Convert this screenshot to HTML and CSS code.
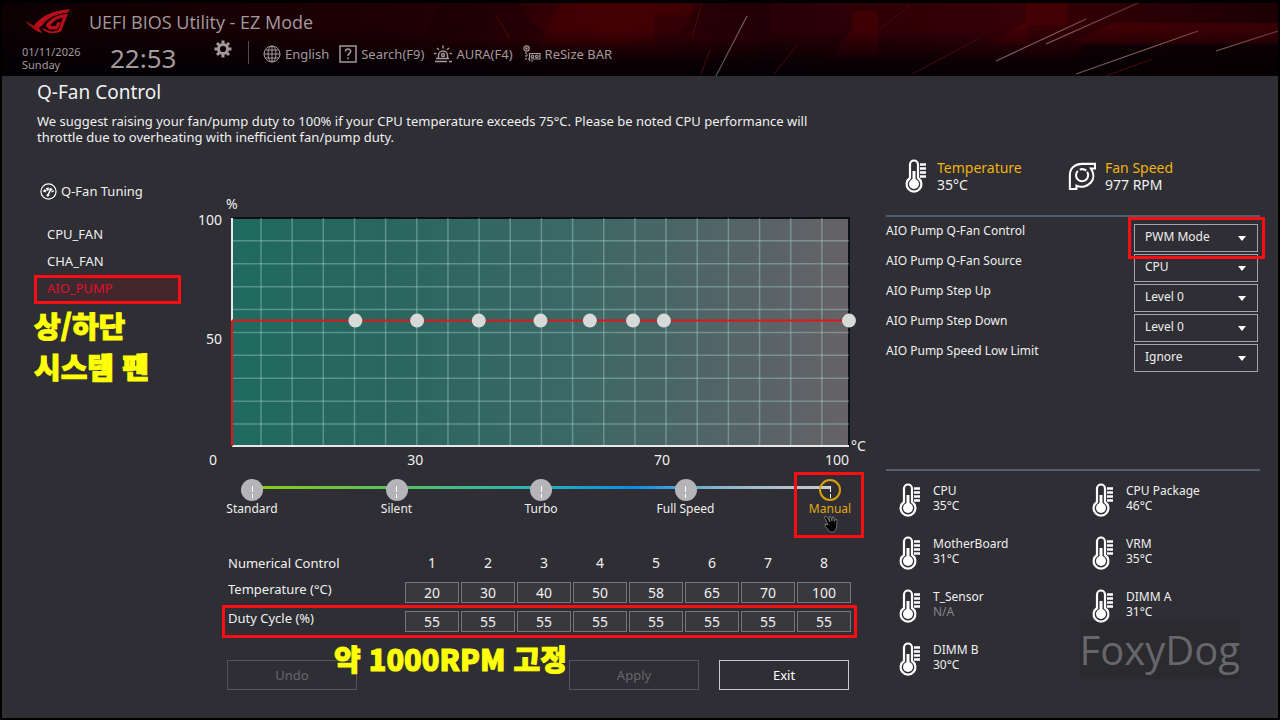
FILE: index.html
```html
<!DOCTYPE html>
<html lang="en">
    <head>
        <meta charset="utf-8" />
        <meta name="viewport" content="width=device-width, initial-scale=1" />
        <title>UEFI BIOS Utility - EZ Mode</title>
        <link rel="stylesheet" href="styles.css">
    </head>
    <body>
        <!-- shared icons -->
        <svg class="sprite" aria-hidden="true">
            <symbol id="thermo" viewBox="0 0 24 34">
                <path d="M6 19V5.500a4 4 0 0 1 8 0V19a7.400 7.400 0 1 1-8 0Z" fill="none" stroke="#fff" stroke-width="2.200"/>
                <circle cx="10" cy="25" r="5" fill="#fff"/>
                <path d="M10 12v12" stroke="#fff" stroke-width="3"/>
                <path d="M16 5.500h6M16 9.500h6M16 13.500h6M16 17.500h6" stroke="#fff" stroke-width="2.400"/>
            </symbol>
        </svg>

        <div class="bios">
            <header class="top">
                <svg class="top-art" viewBox="0 0 1276 73" preserveAspectRatio="none" aria-hidden="true">
                    <defs>
                        <linearGradient id="red" x1="0" x2="1" y1="0" y2="0">
                            <stop offset="0" stop-color="#0c0003"/>
                            <stop offset=".2" stop-color="#180004"/>
                            <stop offset=".34" stop-color="#220004"/>
                            <stop offset=".48" stop-color="#3a0004"/>
                            <stop offset=".6" stop-color="#280006"/>
                            <stop offset=".8" stop-color="#360006"/>
                            <stop offset="1" stop-color="#1c0004"/>
                        </linearGradient>
                        <linearGradient id="fade" x1="0" x2="0" y1="0" y2="1">
                            <stop offset=".35" stop-color="#030004" stop-opacity="0"/>
                            <stop offset=".8" stop-color="#030004" stop-opacity=".8"/>
                            <stop offset="1" stop-color="#030004"/>
                        </linearGradient>
                        <linearGradient id="ray" x1="0" x2="1" y1="1" y2="0">
                            <stop offset="0" stop-color="#555"/>
                            <stop offset=".6" stop-color="#8a5a5a"/>
                            <stop offset="1" stop-color="#4a1216"/>
                        </linearGradient>
                    </defs>
                    <rect width="1276" height="73" fill="url(#red)"/>
                    <path d="M580 0h110v12H652v30H538l20-42Z" fill="#5a0004" opacity=".35"/>
                    <path d="M850 8h26v48h-50l24-30Z" fill="#5a0004" opacity=".4"/>
                    <path d="M1024 0h42v22h-40v20h-40l38-24Z" fill="#5a0004" opacity=".4"/>
                    <path d="M1110 20h168v20H1068Z" fill="#500004" opacity=".5"/>
                    <path d="M440 0h78l20 30H424ZM698 0h70v30h-86Z" fill="#100006" opacity=".3"/>
                    <rect width="1276" height="73" fill="url(#fade)"/>
                    <path d="M1082 42h194v31H1060Z" fill="#060003" opacity=".6"/>
                    <path d="M700 0l-10 34M708 47l-9 24M796 41l-24 30M908 2l-30 24M976 36l-66 35M494 12l14 24M1150 56l-46 17" stroke="#4c080d" stroke-width="1"/>
                    <path d="M714 73l31-60M994 58l90-42M1044 41l92-41M1074 71l122-43M1214 48l62-20" stroke="url(#ray)" stroke-width="1.200"/>
                </svg>

                <div class="brand">
                    <svg class="logo" viewBox="0 0 134 74" role="img" aria-label="ROG">
                        <g fill="#b80d1b">
                            <path d="M24 52C44 22 80 4 133 1c-4 5-6 8-8 10C92 14 66 26 50 48l-10 9Z"/>
                            <path d="M60 49C72 28 94 17 126 14L106 66c-22 10-44 7-58-9l12 3c12 8 26 8 38 2l13-36C94 29 80 37 74 50h16l5-11h10l-10 22H70Z"/>
                            <path d="M0 34c8 7 16 12 25 15l-3 5C12 50 5 43 0 34ZM16 50l24 7 10 14C36 68 25 60 16 50Z"/>
                        </g>
                    </svg>
                    <p class="title">UEFI BIOS Utility - EZ Mode</p>
                </div>

                <div class="status">
                    <p class="date">01/11/2026<br>Sunday</p>
                    <p class="clock">22:53</p>
                    <button class="gear" aria-label="Settings">
                        <svg viewBox="0 0 18 18" width="18" height="18">
                            <circle cx="9" cy="9" r="4.600" fill="none" stroke="currentColor" stroke-width="3"/>
                            <path d="M9 .5v3M9 14.500v3M.5 9h3M14.500 9h3M3 3l2.200 2.200M12.800 12.800L15 15M15 3l-2.200 2.200M5.200 12.800L3 15" stroke="currentColor" stroke-width="3"/>
                        </svg>
                    </button>
                    <div class="tools">
                        <button class="tool">
                            <svg viewBox="0 0 18 18" width="18" height="18" fill="none" stroke="currentColor">
                                <circle cx="9" cy="9" r="8"/>
                                <ellipse cx="9" cy="9" rx="4" ry="8"/>
                                <path d="M9 1v16M1 9h16M2.500 5h13M2.500 13h13"/>
                            </svg>
                            English
                        </button>
                        <button class="tool">
                            <svg viewBox="0 0 18 18" width="18" height="18" fill="none" stroke="currentColor" stroke-width="1.500">
                                <rect x="1" y="1" width="16" height="16"/>
                                <path d="M6.500 6.500c0-3.500 5.500-3 5.200 0C11.500 8.500 9 8.300 9 11M9 12.500v1.800"/>
                            </svg>
                            Search(F9)
                        </button>
                        <button class="tool">
                            <svg viewBox="0 0 18 18" width="18" height="18" fill="none" stroke="currentColor" stroke-width="1.400">
                                <path d="M4.500 13V10.500a4.500 4.500 0 0 1 9 0V13M2 13.500h13M1 16.500h12M15 16.500h3M9 .5v3M3 3l1.800 1.800M15 3l-1.800 1.800M0 8.500h2.500M15.500 8.500H18"/>
                                <circle cx="9" cy="10" r="1.500"/>
                            </svg>
                            AURA(F4)
                        </button>
                        <button class="tool">
                            <svg viewBox="0 0 18 18" width="18" height="18" fill="none" stroke="currentColor" stroke-width="1.200">
                                <circle cx="3.500" cy="3.500" r="2.600"/>
                                <circle cx="3.500" cy="3.500" r=".6"/>
                                <path d="M3 7v7h3M3 10h2" stroke-dasharray="2 1"/>
                                <path d="M6.500 16V8.500H17V14H8M8 16h2"/>
                                <circle cx="9.500" cy="11.300" r="1.300"/>
                                <circle cx="13.800" cy="11.300" r="1.300"/>
                            </svg>
                            ReSize BAR
                        </button>
                    </div>
                </div>
            </header>

            <main>
                <section class="intro">
                    <h1>Q-Fan Control</h1>
                    <p>We suggest raising your fan/pump duty to 100% if your CPU temperature exceeds 75°C. Please be noted CPU performance will throttle due to overheating with inefficient fan/pump duty.</p>
                </section>

                <div class="columns">
                    <nav class="fans">
                        <h2>
                            <svg viewBox="0 0 18 18" width="17" height="17" fill="none" stroke="#fff">
                                <circle cx="9" cy="9" r="8" stroke-width="1.300"/>
                                <path d="M4.500 9.500a4.800 4.800 0 0 1 9 0" stroke-width="3" stroke-dasharray="2.600 .8"/>
                                <path d="M8.500 13l2.500-6" stroke-width="1.600"/>
                                <circle cx="8.300" cy="13" r="1" fill="#fff"/>
                            </svg>
                            Q-Fan Tuning
                        </h2>
                        <ul>
                            <li><button>CPU_FAN</button></li>
                            <li><button>CHA_FAN</button></li>
                            <li class="marked"><button class="active">AIO_PUMP</button></li>
                        </ul>
                        <p class="note" lang="ko">상/하단<br>시스템 팬</p>
                    </nav>

                    <section class="tuning">
                        <div class="chart">
                            <span class="unit-y">%</span>
                            <div class="axis-y"><span>100</span><span>50</span></div>
                            <svg class="plot" role="img" aria-label="Fan curve">
                                <defs>
                                    <linearGradient id="area">
                                        <stop offset="0" stop-color="#1f6a60"/>
                                        <stop offset=".25" stop-color="#2a665f"/>
                                        <stop offset=".55" stop-color="#3b6866"/>
                                        <stop offset=".8" stop-color="#536467"/>
                                        <stop offset="1" stop-color="#666266"/>
                                    </linearGradient>
                                </defs>
                                <rect width="100%" height="100%" fill="url(#area)" stroke="#0b1014" stroke-width="2"/>
                                <g id="grid"><!-- grid lines --></g>
                                <g id="curve"><!-- duty line and points --></g>
                            </svg>
                            <span class="unit-x">°C</span>
                            <span class="zero">0</span>
                            <div class="axis-x"><span>30</span><span>70</span><span>100</span></div>
                        </div>

                        <div class="profiles" role="radiogroup" aria-label="Fan profile">
                            <label><input type="radio" name="profile">Standard</label>
                            <label><input type="radio" name="profile">Silent</label>
                            <label><input type="radio" name="profile">Turbo</label>
                            <label><input type="radio" name="profile">Full Speed</label>
                            <label class="marked"><input type="radio" name="profile" checked>Manual
                                <svg class="pointer" viewBox="0 0 14 18" width="14" height="18" aria-hidden="true">
                                    <path d="M1 1l2 1 3 5-1-5 1.500-.5L8 6l.5-4 1.500.2.300 4.300L12 4l1 1-.5 8-2.500 4H6L1.500 11.500 1 9l3 1-3.500-8Z" fill="#000" stroke="#aaa" stroke-width=".6"/>
                                </svg>
                            </label>
                        </div>

                        <table class="points">
                            <thead>
                                <tr id="numbers"><th scope="col">Numerical Control</th></tr>
                            </thead>
                            <tbody>
                                <tr id="temps"><th scope="row">Temperature (°C)</th></tr>
                                <tr id="duties" class="marked-row"><th scope="row">Duty Cycle (%)</th></tr>
                            </tbody>
                        </table>

                        <div class="actions">
                            <button disabled>Undo</button>
                            <button disabled>Apply</button>
                            <button>Exit</button>
                            <p class="note" lang="ko">약 1000RPM 고정</p>
                        </div>
                    </section>

                    <aside class="side">
                        <div class="live">
                            <div class="reading">
                                <svg width="24" height="34"><use href="#thermo"/></svg>
                                <p><b>Temperature</b><br>35°C</p>
                            </div>
                            <div class="reading">
                                <svg viewBox="0 0 30 30" width="28" height="34" fill="none" stroke="#fff" stroke-width="2.200">
                                    <path d="M2 29V14C2 6 8 2 15 2h14v5h-4.500C28 12 28 18 24.500 22c-3.500 4-10 6-15.500 3.500V29Z"/>
                                    <path d="M10.500 9.500a6.500 6.500 0 1 0 10 1"/>
                                    <path d="M12.500 8.200a7 7 0 0 1 7 1"/>
                                </svg>
                                <p><b>Fan Speed</b><br>977 RPM</p>
                            </div>
                        </div>

                        <form class="settings">
                            <div class="row">
                                <label for="mode">AIO Pump Q-Fan Control</label>
                                <span class="pick marked"><select id="mode"><option>PWM Mode</option></select></span>
                            </div>
                            <div class="row">
                                <label for="source">AIO Pump Q-Fan Source</label>
                                <span class="pick"><select id="source"><option>CPU</option></select></span>
                            </div>
                            <div class="row">
                                <label for="up">AIO Pump Step Up</label>
                                <span class="pick"><select id="up"><option>Level 0</option></select></span>
                            </div>
                            <div class="row">
                                <label for="down">AIO Pump Step Down</label>
                                <span class="pick"><select id="down"><option>Level 0</option></select></span>
                            </div>
                            <div class="row">
                                <label for="limit">AIO Pump Speed Low Limit</label>
                                <span class="pick"><select id="limit"><option>Ignore</option></select></span>
                            </div>
                        </form>

                        <div class="sensors" id="sensors"><!-- temperature sensors --></div>
                        <p class="watermark">FoxyDog</p>
                    </aside>
                </div>
            </main>
        </div>

        <script>
            const puntos = {
                temps: [20, 30, 40, 50, 58, 65, 70, 100],
                duties: [55, 55, 55, 55, 55, 55, 55, 55],
            };

            // grid lines, in % so they follow the plot size
            let lines = "";
            for (let i = 0; i < 19; i++) {
                const x = 4.7 + i * 5.05;
                lines += `<line x1="${x}%" x2="${x}%" y1="0" y2="100%"/>`;
            }
            for (let i = 0; i < 9; i++) {
                const y = 10 + i * 10.05;
                lines += `<line x1="0" x2="100%" y1="${y}%" y2="${y}%"/>`;
            }
            document.querySelector("#grid").innerHTML = lines;

            // curve
            const first = 100 - puntos.duties[0];
            let curve = `<line x1="0" x2="0" y1="0" y2="100%" class="axis"/>
                <line x1="0" x2="100%" y1="100%" y2="100%" class="axis"/>
                <line x1="0" x2="0" y1="${first}%" y2="100%"/>
                <line x1="0" x2="100%" y1="${first}%" y2="${first}%"/>`;
            puntos.temps.forEach((t, i) => {
                curve += `<circle cx="${t}%" cy="${100 - puntos.duties[i]}%" r="7"/>`;
            });
            document.querySelector("#curve").innerHTML = curve;

            // table cells
            puntos.temps.forEach((t, i) => {
                document.querySelector("#numbers").insertAdjacentHTML("beforeend", `<th scope="col">${i + 1}</th>`);
                document.querySelector("#temps").insertAdjacentHTML("beforeend", `<td><input type="text" aria-label="Temperature ${i + 1}" value="${t}"></td>`);
                document.querySelector("#duties").insertAdjacentHTML("beforeend", `<td><input type="text" aria-label="Duty cycle ${i + 1}" value="${puntos.duties[i]}"></td>`);
            });

            // sensors
            const sensors = [
                {name:"CPU", value:"35°C"},
                {name:"CPU Package", value:"46°C"},
                {name:"MotherBoard", value:"31°C"},
                {name:"VRM", value:"35°C"},
                {name:"T_Sensor", value:"N/A"},
                {name:"DIMM A", value:"31°C"},
                {name:"DIMM B", value:"30°C"}
            ];
            sensors.forEach((s) => {
                document.querySelector("#sensors").innerHTML += `<div class="sensor">
                    <svg width="24" height="34"><use href="#thermo"/></svg>
                    <p>${s.name}<br><span class="${s.value == "N/A" ? "off" : ""}">${s.value}</span></p>
                </div>`;
            });
        </script>
    </body>
</html>
```
FILE: styles.css
```css
*{ margin:0; padding:0; box-sizing:border-box; }
body{ background-color: #000;
    color: #f0f0f0;
    font-family: "Noto Sans", "Noto Sans CJK KR", sans-serif;
    font-size: 13px; }
button, input, select{ font: inherit; color: inherit; background: none; border: 0; }
ul{ list-style: none; }
svg{ display: block; flex: none; }
.sprite{ position: absolute; width: 0; height: 0; }

.bios{ min-height: 100vh;
    display: flex;
    flex-direction: column;
    border: 2px solid #000;
    border-top-width: 3px;
    background-color: #2e2e34; }

/* header */
.top{ position: relative;
    height: 73px;
    background-color: #050003;
    color: #a39a9b; }
.top-art{ position: absolute; inset: 0; width: 100%; height: 100%; }
.brand, .status{ position: relative; display: flex; }
.brand{ align-items: center; gap: 18px; height: 37px; padding-left: 23px; }
.logo{ width: 46px; height: 25px; }
.title{ font-family: "Open Sans", sans-serif; font-size: 18px; line-height: 24px; }
.status{ align-items: flex-start; padding-left: 20px; }
.date{ width: 88px; padding-top: 5px; font-size: 11px; line-height: 13px; }
.clock{ width: 104px; font-size: 26px; line-height: 36px; }
.gear{ height: 18px; width: 34px; }
.tools{ display: flex; gap: 10px; padding: 4px 0 0 14px; margin-top: 1px; border-left: 1px solid #544b4d; height: 23px; }
.tool{ display: flex; align-items: center; gap: 4px; height: 18px; white-space: nowrap; }

/* intro */
.intro{ padding: 4px 3px 0; }
h1{ font-size: 19px; font-weight: 400; line-height: 24px; }
.intro p{ max-width: 790px; margin-top: 9px; line-height: 16px; }

main{ padding: 0 18px 0 32px; }
.columns{ display: grid;
    grid-template-columns: 163px minmax(0, 1fr) 394px;
    padding-top: 13px; }

/* red boxes and yellow notes */
.marked{ position: relative; }
.marked::after{ content: "";
    position: absolute;
    border: 3px solid #fb0d12;
    pointer-events: none; }
.marked-row{ outline: 3px solid #fb0d12; outline-offset: 3px; }
.note{ font-family: "Noto Sans CJK KR", sans-serif;
    font-size: 29px;
    font-weight: 900;
    line-height: 41px;
    color: #ffff08;
    -webkit-text-stroke: 1px #ffff08; }

/* fan list */
.fans{ padding-top: 23px; }
.fans h2{ display: flex;
    align-items: center;
    gap: 4px;
    padding-left: 6px;
    font-size: 13px;
    font-weight: 400;
    line-height: 20px; }
.fans ul{ width: 147px; margin-top: 19px; }
.fans li button{ display: block;
    width: 100%;
    height: 27px;
    padding-left: 13px;
    text-align: left; }
.fans li .active{ color: #e0102c; background: linear-gradient(90deg, #2e2e34, #43272d 40%); }
.fans .marked::after{ inset: 1px 0 -3px; }
.fans .note{ margin-top: 4px; }

/* chart */
.tuning{ padding-top: 38px; }
.chart{ display: grid;
    grid-template-columns: 25px 10px minmax(0, 1fr) 17px;
    grid-template-rows: 22px 228px 27px;
    font-size: 14px; }
.unit-y{ grid-column: 2 / 4; line-height: 16px; margin-left: 4px; }
.axis-y{ grid-column: 1; grid-row: 2;
    display: flex;
    flex-direction: column;
    gap: 99px;
    text-align: right;
    line-height: 20px;
    margin-top: -8px; }
.plot{ grid-column: 3; grid-row: 2;
    width: 100%;
    height: 100%;
    overflow: visible; }
.unit-x{ grid-column: 4; grid-row: 2; align-self: end; line-height: 16px; margin: 0 0 -8px 2px; }
.zero{ grid-column: 1; grid-row: 3; text-align: right; padding-right: 5px; line-height: 28px; }
.axis-x{ grid-column: 3; grid-row: 3;
    display: grid;
    grid-template-columns: 31fr 40fr 29fr;
    text-align: right;
    line-height: 28px; }
#grid line{ stroke: #a5d5cc; stroke-opacity: .4; stroke-width: 1.5px; }
#curve line{ stroke: #e2161a; stroke-width: 2px; }
#curve .axis{ stroke: #e8e8e8; }
#curve circle{ fill: #d8d9d9; }

/* profiles */
.profiles{ display: flex;
    justify-content: space-between;
    margin: 6px 6px 0 25px;
    background: linear-gradient(90deg, #8ccc14, #4fc06a 28%, #2bb5b5 48%, #0a8ee6 66%, #8fb6cc 82%, #ccc) no-repeat 30px 7px / calc(100% - 60px) 3px; }
.profiles label{ display: flex;
    flex-direction: column;
    align-items: center;
    width: 60px;
    font-size: 12px;
    line-height: 16px;
    white-space: nowrap; }
.profiles input{ appearance: none;
    display: flex;
    justify-content: center;
    width: 22px;
    height: 22px;
    border-radius: 50%;
    background-color: #b5b5b9; }
.profiles input::after{ content: "";
    width: 1px;
    height: 12px;
    margin-top: 7px;
    background: linear-gradient(#fff 6px, transparent 6px 8px, #fff 8px); }
.profiles input:checked{ background: none; border: 2px solid #d9a012; }
.profiles input:checked::after{ margin-top: 5px; }
.profiles .marked{ color: #e0a810; }
.profiles .marked::after{ inset: -7px -4px -21px -6px; }
.pointer{ position: absolute; top: 36px; left: 24px; }

/* numeric table */
.points{ width: calc(100% - 42px);
    margin: 27px 13px 0 29px;
    table-layout: fixed;
    border-spacing: 2px 8px; }
.points th{ font-weight: 400; font-size: 14px; line-height: 22px; }
.points th:first-child{ width: 175px; text-align: left; font-size: 13px; }
.points tbody th{ vertical-align: top; line-height: 14px; }
.points input{ display: block;
    width: 100%;
    height: 21px;
    border: 1px solid #77777b;
    background-color: #38383d;
    font-size: 14px;
    text-align: center; }

.actions{ position: relative; display: flex; gap: 20px; margin: 20px 17px 0 30px; }
.actions button{ width: 130px; height: 30px; border: 1px solid #c8c8c8; color: #fff; }
.actions button:first-child{ margin-right: auto; }
.actions button:disabled{ border-color: #55555a; color: #68686c; }
.actions .note{ position: absolute; left: 107px; top: -22px; white-space: nowrap; }

/* right side */
.side{ padding-left: 20px; }
.live{ display: grid; grid-template-columns: 164px 1fr; padding: 1px 0 0 18px; height: 57px; }
.reading, .sensor{ display: flex; }
.reading{ gap: 9px; font-size: 14px; line-height: 17px; }
.reading b{ font-weight: 400; color: #f0b310; }
.settings{ border-top: 2px solid #51606e;
    padding-top: 7px;
    height: 254px;
    font-size: 12px; }
.row{ display: flex; justify-content: space-between; height: 30px; line-height: 14px; padding-right: 2px; }
.pick{ position: relative; width: 124px; height: 28px; }
.pick::before{ content: "";
    position: absolute;
    right: 12px;
    top: 12px;
    border: 4px solid transparent;
    border-top: 5px solid #fff;
    border-bottom: 0;
    pointer-events: none; }
.pick select{ appearance: none;
    width: 100%;
    height: 28px;
    padding: 0 10px 2px;
    border: 1px solid #a5a5a9; }
.pick.marked{ z-index: 1; }
.pick.marked::after{ inset: -7px -7px -7px -6px; }
.sensors{ border-top: 2px solid #51606e;
    display: grid;
    grid-template-columns: 193px 1fr;
    grid-auto-rows: 53px;
    padding: 12px 0 0 12px; }
.sensor{ gap: 11px; font-size: 12px; line-height: 15px; }
.off{ color: #85858a; }
.watermark{ position: absolute;
    right: 40px;
    bottom: 41px;
    background-color: rgba(0, 0, 0, .08);
    color: #66666b;
    font-family: "Open Sans", sans-serif;
    font-size: 40px;
    line-height: 58px; }
```
